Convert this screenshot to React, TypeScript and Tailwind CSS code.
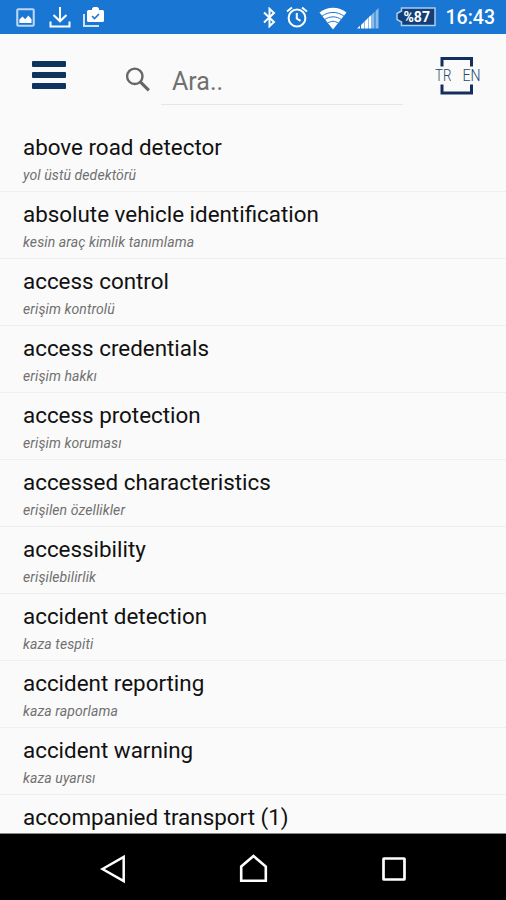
const terms = [
  { en: 'above road detector', tr: 'yol üstü dedektörü' },
  { en: 'absolute vehicle identification', tr: 'kesin araç kimlik tanımlama' },
  { en: 'access control', tr: 'erişim kontrolü' },
  { en: 'access credentials', tr: 'erişim hakkı' },
  { en: 'access protection', tr: 'erişim koruması' },
  { en: 'accessed characteristics', tr: 'erişilen özellikler' },
  { en: 'accessibility', tr: 'erişilebilirlik' },
  { en: 'accident detection', tr: 'kaza tespiti' },
  { en: 'accident reporting', tr: 'kaza raporlama' },
  { en: 'accident warning', tr: 'kaza uyarısı' },
  { en: 'accompanied transport (1)', tr: '' },
];

function StatusBar() {
  return (
    <div className="flex h-[34px] shrink-0 items-center bg-[#1976d2] pl-4 pr-[11px] text-white">
      {/* Notifications */}
      <svg className="mt-px h-[19px] w-[19px]" viewBox="0 0 18 18" fill="none">
        <rect x="1.2" y="1.2" width="15.6" height="15.6" rx="1" stroke="#b9d6f3" strokeWidth="2" />
        <path d="M3.200 14.300v-3.500l3-2.800 2.500 2.600 3-3.600 3 3.600v3.700z" fill="#fff" />
      </svg>
      <svg className="ml-[14px] h-[21px] w-[22px]" viewBox="0 0 22 21" fill="none" stroke="#fff" strokeWidth="2">
        <path d="M11 0v14M4.500 8l6.500 6.300L17.500 8M1.500 14.500v5h19v-5" />
      </svg>
      <svg className="ml-3 h-[22px] w-[22px]" viewBox="0 0 22 22">
        <path d="M1 8v12h15" fill="none" stroke="#cfe2f7" strokeWidth="2" />
        <path
          d="M9 4V2.500L10.500 1h4L16 2.500V4h3.500A1.500 1.500 0 0 1 21 5.500v9a1.500 1.500 0 0 1-1.500 1.500h-14A1.500 1.500 0 0 1 4 14.500v-9A1.500 1.500 0 0 1 5.500 4z"
          fill="#fff"
        />
        <path d="M9 10l2.500 2.500L16 8" fill="none" stroke="#1976d2" strokeWidth="1.600" />
      </svg>

      <div className="ml-auto flex items-center">
        <svg className="h-[21px] w-[15px]" viewBox="0 0 15 21" fill="none" stroke="#fff" strokeWidth="2">
          <path d="M2 5.500l10 9.500-4.500 4.200V1.800L12 6 2 15.500" />
        </svg>
        <svg className="ml-[9px] h-[22px] w-[22px]" viewBox="0 0 22 22" fill="none" stroke="#fff" strokeWidth="2">
          <circle cx="11" cy="12" r="8.400" />
          <path d="M10.800 7v5.500l3.700 2.400M1 5.500l5-4M16 1.500l5 4" />
        </svg>
        <svg className="mt-0.5 ml-[11px] h-[23px] w-[28px]" viewBox="0 0 28 23">
          <path d="M.5 5.500C8-1 20-1 27.500 5.500L14 22.500z" fill="#fff" />
          <path d="M3 9.200c6.500-5 15.500-5 22 0M5.500 12.700c5-3.800 12-3.800 17 0M8.500 16.200c3.500-2.500 7.500-2.500 11 0" fill="none" stroke="#1976d2" strokeWidth="1" />
        </svg>
        <svg className="mt-0.5 ml-[10px] h-[21px] w-[22px]" viewBox="0 0 22 21">
          <path d="M0 20.500L3 17.800v2.700zM4 17l3-3v6.500H4zM7.500 13.500l3.500-3.500v10.500H7.500zM11.500 9.500l3-2.800v13.800h-3z" fill="#fff" />
          <path d="M15 6.200l2.500-2.500v16.800H15zM18.500 3L21.500 0v20.500h-3z" fill="#8dbbea" />
        </svg>
        <div className="relative ml-4 h-5 w-[41px]">
          <svg className="h-5 w-[41px]" viewBox="0 0 41 20">
            <path d="M6.500 1h33.500v17.500H6.500V15L2 12.500v-6L6.500 4z" fill="#123f78" stroke="#a9cdf0" strokeWidth="1.500" />
          </svg>
          <span className="absolute left-[9px] top-0 font-['Roboto',sans-serif] text-sm font-bold leading-5">%87</span>
        </div>
        <span className="mt-0.5 ml-[10px] font-['Roboto',sans-serif] text-[19.500px] font-medium leading-5">16:43</span>
      </div>
    </div>
  );
}

function Header() {
  return (
    <header className="flex h-[91px] shrink-0 items-start pl-8 pr-[26px]">
      <button className="mt-[27px] flex w-[34px] flex-col gap-[5px]">
        <span className="h-1.5 w-full rounded-[1px] bg-[#0d345c]" />
        <span className="h-1.5 w-full rounded-[1px] bg-[#0d345c]" />
        <span className="h-1.5 w-full rounded-[1px] bg-[#0d345c]" />
      </button>
      <svg className="ml-[59px] mt-[33px] h-[26px] w-[26px]" viewBox="0 0 26 26" fill="none" stroke="#666" strokeWidth="2.400">
        <circle cx="9.800" cy="9.300" r="7.700" />
        <path d="M15.300 14.800l8.500 8.500" strokeWidth="3.200" />
      </svg>
      <div className="ml-[10px] mt-[30px] flex h-[41px] w-[242px] items-center border-b border-[#e6e6e6] pb-1 pl-[11px] font-['Roboto',sans-serif] text-[25px] text-[#707070]">
        Ara..
      </div>
      <button className="relative ml-8 mt-[21px] h-10 w-[45px]">
        <svg className="h-10 w-[45px]" viewBox="0 0 45 40" fill="none" stroke="#142f5f" strokeWidth="3">
          <path d="M7 11.500v-8h29.500v8M7 29.500v8.500h29.500v-8.500" />
        </svg>
        <span className="absolute inset-x-0 top-[11px] flex justify-between font-['Roboto',sans-serif] text-base font-light leading-5 text-[#24486a]">
          <span className="origin-left scale-x-[0.83]">TR</span>
          <span className="origin-right scale-x-[0.88]">EN</span>
        </span>
      </button>
    </header>
  );
}

function NavBar() {
  return (
    <nav className="flex h-[67px] shrink-0 items-center border-t border-[#8a8a8a] bg-black pl-[100px] pt-[3px]">
      <svg className="h-[30px] w-[28px]" viewBox="0 0 28 30" fill="none" stroke="#fff" strokeWidth="2.500">
        <path d="M2.500 15L23.700 3v24z" />
      </svg>
      <svg className="ml-[111px] h-[30px] w-[30px]" viewBox="0 0 30 30" fill="none" stroke="#fff" strokeWidth="2.600">
        <path d="M2.200 12.500L14.500 2l12.300 10.500v14.300H2.200z" />
      </svg>
      <svg className="ml-[113px] h-[24px] w-[24px]" viewBox="0 0 24 24" fill="none" stroke="#fff" strokeWidth="2.700">
        <rect x="1.500" y="1.500" width="21" height="21" rx="0.500" />
      </svg>
    </nav>
  );
}

export default function App() {
  return (
    <div className="flex h-[900px] w-[506px] flex-col overflow-hidden bg-[#fafafa]">
      <StatusBar />
      <Header />
      <ul className="min-h-0 flex-1 overflow-hidden font-['Roboto',sans-serif]">
        {terms.map(term => (
          <li key={term.en} className="h-[67px] border-b border-[#efefef] pl-[23px] pt-2">
            <p className="text-[22.400px] leading-7 text-[#111]">{term.en}</p>
            <p className="text-[14px] italic leading-7 tracking-[0.1px] text-[#707070]">{term.tr}</p>
          </li>
        ))}
      </ul>
      <NavBar />
    </div>
  );
}
